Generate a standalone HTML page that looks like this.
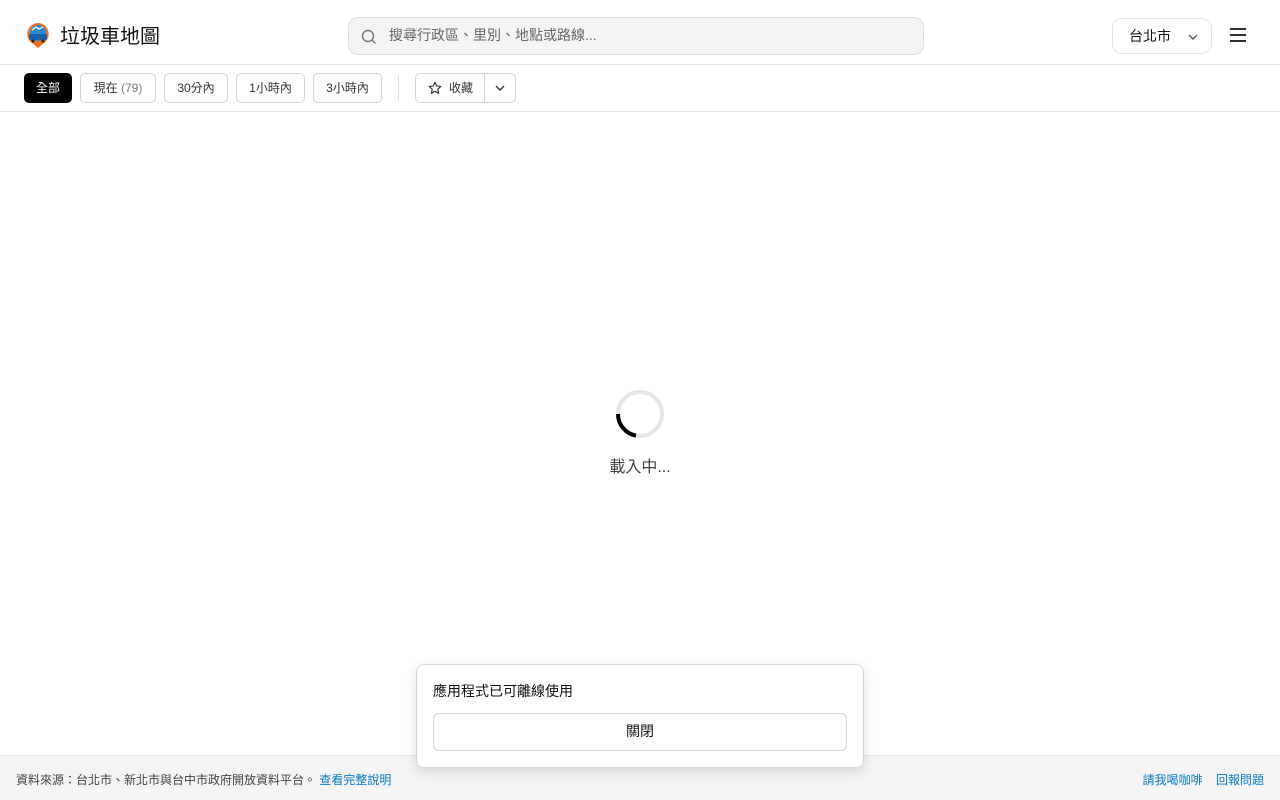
<!DOCTYPE html>
<html lang="zh-TW"><head><meta charset="utf-8">
<style>
*{box-sizing:border-box;margin:0;padding:0}
body{width:1280px;height:800px;overflow:hidden;background:#fff;font-family:"Liberation Sans","Noto Sans CJK TC",sans-serif;color:#111;position:relative}
.hdr{position:absolute;top:0;left:0;width:1280px;height:65px;border-bottom:1px solid #e5e5e5}
.logo{position:absolute;left:26px;top:22px}
.title{position:absolute;left:60px;top:20px;font-size:20px;color:#111}
.search{position:absolute;left:348px;top:17px;width:576px;height:38px;border:1px solid #e0e0e0;border-radius:10px;background:#f4f4f4}
.search span{position:absolute;left:40px;top:7px;font-size:14px;color:#666}
.search svg{position:absolute;left:12px;top:11px}
.city{position:absolute;left:1112px;top:18px;width:100px;height:36px;border:1px solid #e3e3e3;border-radius:10px}
.city span{position:absolute;left:16px;top:7px;font-size:14px}
.city svg{position:absolute;left:74px;top:13px}
.menu{position:absolute;left:1230px;top:28px}
.bar{position:absolute;top:65px;left:0;width:1280px;height:47px;border-bottom:1px solid #e5e5e5}
.chip{position:absolute;top:8px;height:30px;border:1px solid #d4d4d4;border-radius:5px;font-size:12px;line-height:28px;text-align:center;color:#333;background:#fff}
.chip.on{background:#000;color:#fff;border-color:#000}
.sep{position:absolute;left:398px;top:11px;width:1px;height:24px;background:#ddd}
.spin{position:absolute;left:614px;top:388px}
.load{position:absolute;left:0;width:1280px;top:453px;text-align:center;font-size:16px;color:#444}
.foot{position:absolute;left:0;top:755px;width:1280px;height:45px;background:#f4f4f4;border-top:1px solid #e5e5e5;font-size:12px;color:#444}
.foot .l{position:absolute;left:16px;top:15px}
.foot a{color:#0a7bc4;text-decoration:none}
.foot .r{position:absolute;right:16px;top:15px}
.toast{position:absolute;left:416px;top:664px;width:448px;height:104px;background:#fff;border:1px solid #d8d8d8;border-radius:8px;box-shadow:0 4px 12px rgba(0,0,0,.12)}
.toast .t{position:absolute;left:16px;top:16px;font-size:14px}
.toast .b{position:absolute;left:16px;top:48px;width:414px;height:38px;border:1px solid #d4d4d4;border-radius:6px;text-align:center;line-height:34px;font-size:14px}
</style></head><body>
<div class="hdr">
 <svg class="logo" width="24" height="27" viewBox="0 0 24 27">
  <path d="M12 1a11 11 0 0 1 6 20l-6 5-6-5A11 11 0 0 1 12 1z" fill="#f07020"/>
  <circle cx="12" cy="11" r="8" fill="#2a8ad8"/>
  <rect x="3" y="12" width="18" height="6" rx="1" fill="#1a5fa8"/>
  <path d="M6 8l4-3 3 2 4-2" stroke="#fff" stroke-width="1.2" fill="none"/>
  <circle cx="7" cy="19" r="1.5" fill="#222"/><circle cx="17" cy="19" r="1.5" fill="#222"/>
 </svg>
 <div class="title">垃圾車地圖</div>
 <div class="search"><svg width="16" height="16" viewBox="0 0 16 16" fill="none" stroke="#777" stroke-width="1.4"><circle cx="7" cy="7" r="5.5"/><path d="M11 11l3.5 3.5"/></svg><span>搜尋行政區、里別、地點或路線...</span></div>
 <div class="city"><span>台北市</span><svg width="12" height="10" viewBox="0 0 12 10" fill="none" stroke="#555" stroke-width="1.4"><path d="M2 3l4 4 4-4"/></svg></div>
 <svg class="menu" width="16" height="14" viewBox="0 0 16 14" stroke="#111" stroke-width="1.8"><path d="M0 1h16M0 7h16M0 13h16"/></svg>
</div>
<div class="bar">
 <div class="chip on" style="left:24px;width:48px">全部</div>
 <div class="chip" style="left:80px;width:76px">現在 <span style="color:#777">(79)</span></div>
 <div class="chip" style="left:164px;width:64px">30分內</div>
 <div class="chip" style="left:236px;width:69px">1小時內</div>
 <div class="chip" style="left:313px;width:69px">3小時內</div>
 <div class="sep"></div>
 <div class="chip" style="left:415px;width:101px;text-align:left">
  <svg style="position:absolute;left:12px;top:7px" width="14" height="14" viewBox="0 0 24 24" fill="none" stroke="#333" stroke-width="2" stroke-linejoin="round"><path d="M12 2l3 6.5 7 .8-5.2 4.8 1.4 7-6.2-3.5-6.2 3.5 1.4-7L2 9.3l7-.8z"/></svg>
  <span style="position:absolute;left:33px">收藏</span>
  <div style="position:absolute;left:68px;top:0;width:1px;height:28px;background:#d4d4d4"></div>
  <svg style="position:absolute;left:79px;top:10px" width="10" height="8" viewBox="0 0 10 8" fill="none" stroke="#333" stroke-width="1.4"><path d="M1 2l4 4 4-4"/></svg>
 </div>
</div>
<svg class="spin" width="52" height="52" viewBox="0 0 52 52" fill="none">
 <circle cx="26" cy="26" r="22" stroke="#e6e6e6" stroke-width="4"/>
 <path d="M4 26A22 22 0 0 0 22 47.6" stroke="#000" stroke-width="4"/>
</svg>
<div class="load">載入中...</div>
<div class="foot">
 <div class="l">資料來源：台北市、新北市與台中市政府開放資料平台。 <a>查看完整說明</a></div>
 <div class="r"><a>請我喝咖啡</a>&nbsp;&nbsp;&nbsp;&nbsp;<a>回報問題</a></div>
</div>
<div class="toast"><div class="t">應用程式已可離線使用</div><div class="b">關閉</div></div>
</body></html>
